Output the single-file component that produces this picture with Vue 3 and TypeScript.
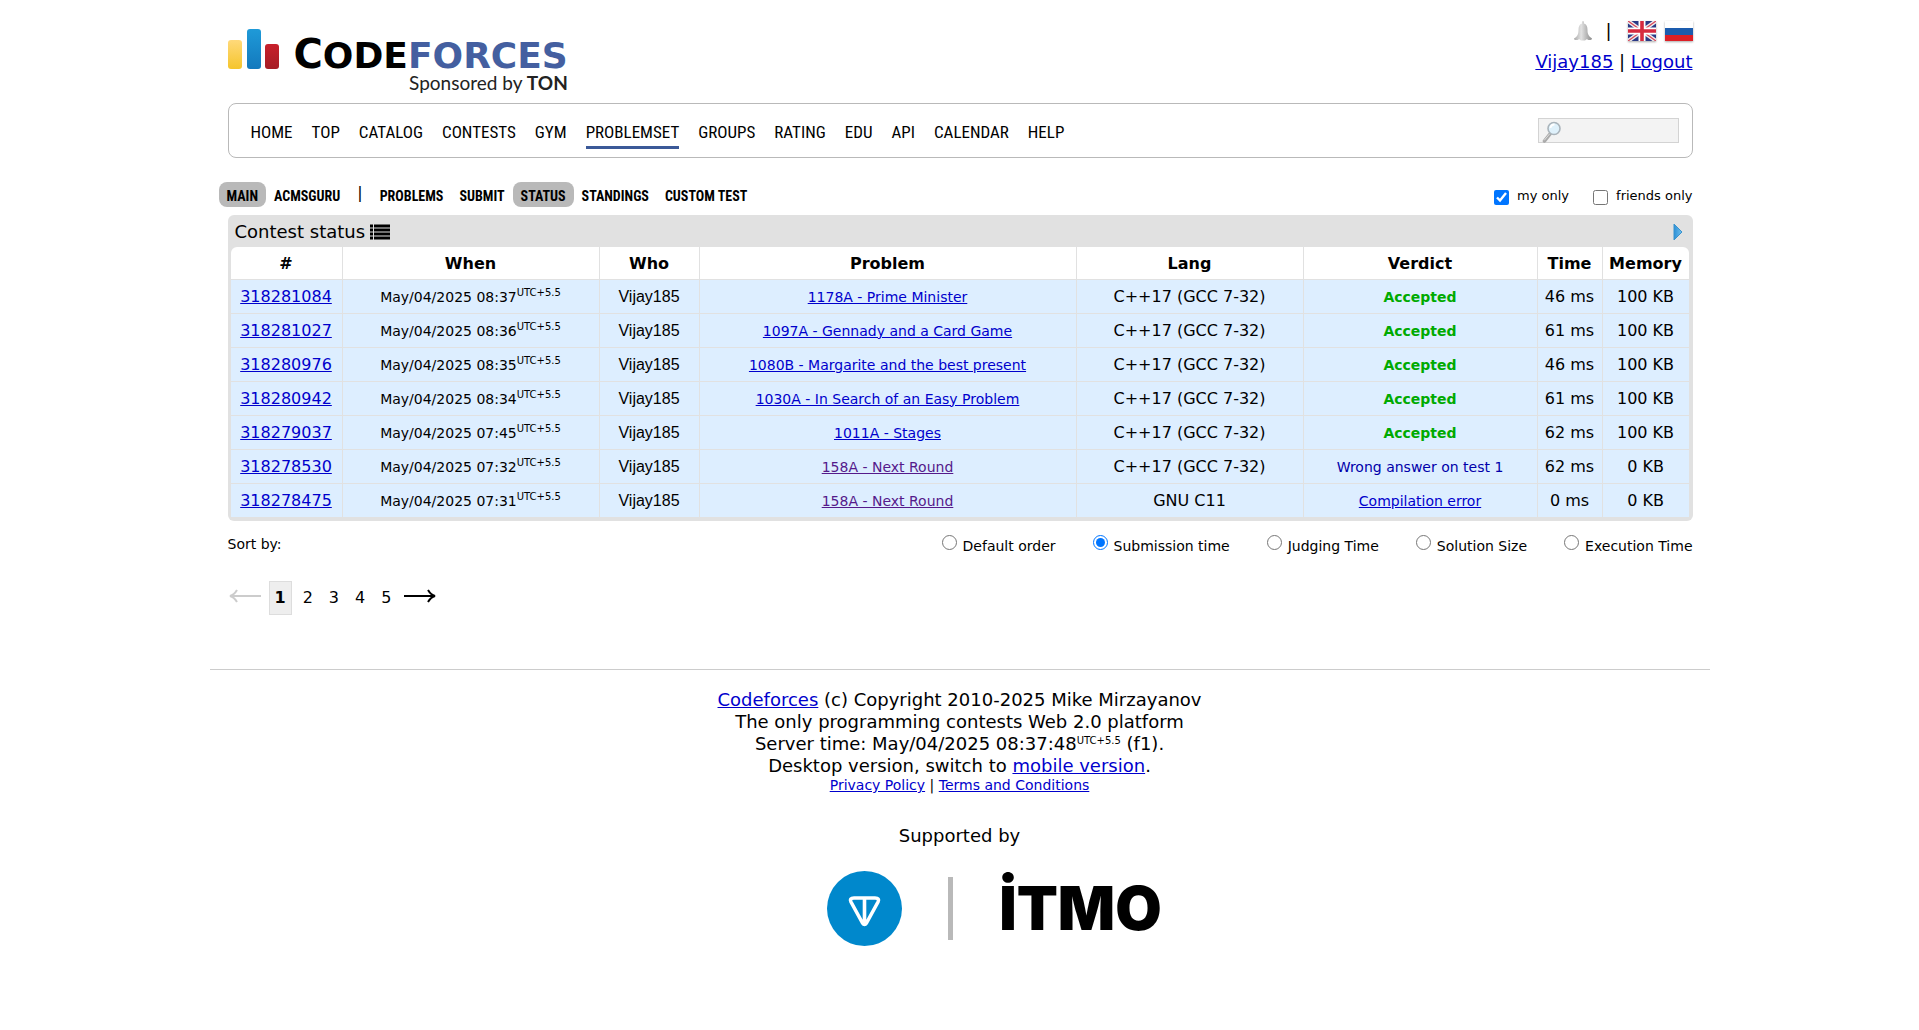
<script setup lang="ts">
import { ref } from 'vue'

interface Submission {
  id: string
  time: string
  problem: string
  visited?: boolean
  lang: string
  verdict: 'Accepted' | 'Wrong answer on test 1' | 'Compilation error'
  duration: string
  memory: string
}

const menu = ['HOME', 'TOP', 'CATALOG', 'CONTESTS', 'GYM', 'PROBLEMSET', 'GROUPS', 'RATING', 'EDU', 'API', 'CALENDAR', 'HELP']
const sectionMenu = ['MAIN', 'ACMSGURU']
const pageMenu = ['PROBLEMS', 'SUBMIT', 'STATUS', 'STANDINGS', 'CUSTOM TEST']
const columns = ['#', 'When', 'Who', 'Problem', 'Lang', 'Verdict', 'Time', 'Memory']
const gcc = 'C++17 (GCC 7-32)'

const submissions: Submission[] = [
  { id: '318281084', time: '08:37', problem: '1178A - Prime Minister', lang: gcc, verdict: 'Accepted', duration: '46 ms', memory: '100 KB' },
  { id: '318281027', time: '08:36', problem: '1097A - Gennady and a Card Game', lang: gcc, verdict: 'Accepted', duration: '61 ms', memory: '100 KB' },
  { id: '318280976', time: '08:35', problem: '1080B - Margarite and the best present', lang: gcc, verdict: 'Accepted', duration: '46 ms', memory: '100 KB' },
  { id: '318280942', time: '08:34', problem: '1030A - In Search of an Easy Problem', lang: gcc, verdict: 'Accepted', duration: '61 ms', memory: '100 KB' },
  { id: '318279037', time: '07:45', problem: '1011A - Stages', lang: gcc, verdict: 'Accepted', duration: '62 ms', memory: '100 KB' },
  { id: '318278530', time: '07:32', problem: '158A - Next Round', visited: true, lang: gcc, verdict: 'Wrong answer on test 1', duration: '62 ms', memory: '0 KB' },
  { id: '318278475', time: '07:31', problem: '158A - Next Round', visited: true, lang: 'GNU C11', verdict: 'Compilation error', duration: '0 ms', memory: '0 KB' },
]

const orders = ['Default order', 'Submission time', 'Judging Time', 'Solution Size', 'Execution Time']
const order = ref('Submission time')
const myOnly = ref(true)
const friendsOnly = ref(false)
const query = ref('')
</script>

<template>
  <div class="page">
    <header class="header">
      <a class="logo" href="#" aria-label="Codeforces">
        <svg class="bars" width="52" height="42" viewBox="0 0 52 42">
          <defs>
            <linearGradient id="barYellow" x2="0" y2="1"><stop offset="0" stop-color="#ffd97a" /><stop offset="1" stop-color="#f5c52c" /></linearGradient>
            <linearGradient id="barBlue" x2="0" y2="1"><stop offset="0" stop-color="#1f9ad8" /><stop offset="1" stop-color="#1379bd" /></linearGradient>
            <linearGradient id="barRed" x2="0" y2="1"><stop offset="0" stop-color="#c8202b" /><stop offset="1" stop-color="#a51d24" /></linearGradient>
          </defs>
          <rect x="0" y="12" width="14" height="29" rx="3" fill="url(#barYellow)" />
          <rect x="19" y="1" width="14" height="40" rx="3" fill="url(#barBlue)" />
          <rect x="37" y="16" width="14" height="25" rx="3" fill="url(#barRed)" />
        </svg>
        <span class="wordmark">
          <span class="name"><span class="initial">C</span>ODE<span class="forces">FORCES</span></span>
          <span class="sponsor">Sponsored by <b>TON</b></span>
        </span>
      </a>
      <div class="account">
        <div class="locale">
          <svg width="20" height="20" viewBox="0 0 20 20">
            <defs><linearGradient id="bell"><stop offset="0" stop-color="#aaa" /><stop offset=".4" stop-color="#e2e2e2" /><stop offset="1" stop-color="#8c8c8c" /></linearGradient></defs>
            <path d="M10 0c1 0 1.200 1 1 2.500 2.500 .5 3.500 3 3.500 6.500 0 4 1 6 4.500 8.500 0 2-3 1.500-4 1.500l-1-1-2 1.500H8L6 18l-1 1C3 19 1 19.500 1 17.500 4.500 15.500 5.500 13 5.500 9 5.500 5.500 6.500 3 9 2.500c-.3-1.500 0-2.500 1-2.500z" fill="url(#bell)" />
          </svg>
          <span class="bar">|</span>
          <a href="#" aria-label="In English">
            <svg class="flag" width="28" height="20" viewBox="0 0 28 20">
              <rect width="28" height="20" fill="#2b3a86" />
              <path d="M0 0L28 20M28 0L0 20" stroke="#eee" stroke-width="4" />
              <path d="M0 0L28 20M28 0L0 20" stroke="#d8475a" stroke-width="1.300" />
              <path d="M14 0V20M0 10H28" stroke="#fff" stroke-width="7" />
              <path d="M14 0V20M0 10H28" stroke="#d62a3f" stroke-width="3.600" />
            </svg>
          </a>
          <a href="#" aria-label="In Russian">
            <svg class="flag" width="28" height="20" viewBox="0 0 28 20">
              <rect width="28" height="7" fill="#fff" />
              <rect y="7" width="28" height="7" fill="#1c5cae" />
              <rect y="14" width="28" height="6" fill="#dd1f26" />
            </svg>
          </a>
        </div>
        <div><a href="#">Vijay185</a> | <a href="#">Logout</a></div>
      </div>
    </header>

    <nav class="menu">
      <a v-for="item in menu" :key="item" href="#" :class="{ current: item === 'PROBLEMSET' }">{{ item }}</a>
      <label class="search">
        <svg width="20" height="22" viewBox="0 0 20 22">
          <path d="M8 13L2.500 20" stroke="#aaa" stroke-width="3.600" stroke-linecap="round" />
          <path d="M7.500 13L2.500 19" stroke="#ddd" stroke-width="1" stroke-linecap="round" />
          <circle cx="12" cy="7.500" r="6" fill="#dff1fb" stroke="#aab4bb" stroke-width="1.600" />
          <path d="M8.500 7a4 4 0 0 1 4-3.500" fill="none" stroke="#fff" stroke-width="1.800" />
        </svg>
        <input v-model="query" type="text" aria-label="Search" />
      </label>
    </nav>

    <div class="subbar">
      <nav class="submenu">
        <a v-for="item in sectionMenu" :key="item" href="#" :class="{ current: item === 'MAIN' }">{{ item }}</a>
        <span class="divider">|</span>
        <a v-for="item in pageMenu" :key="item" href="#" :class="{ current: item === 'STATUS' }">{{ item }}</a>
      </nav>
      <div class="filters">
        <label><input v-model="myOnly" type="checkbox" />my only</label>
        <label><input v-model="friendsOnly" type="checkbox" />friends only</label>
      </div>
    </div>

    <section class="datatable">
      <div class="caption">
        <span>Contest status</span>
        <svg width="20" height="16" viewBox="0 0 20 16">
          <path d="M0 2h3M0 6h3M0 10h3M0 14h3M4 2h16M4 6h16M4 10h16M4 14h16" stroke="#000" stroke-width="3" />
        </svg>
        <svg class="next" width="10" height="18" viewBox="0 0 10 18">
          <defs><linearGradient id="tri"><stop offset="0" stop-color="#2b8fd6" /><stop offset="1" stop-color="#6fc0ee" /></linearGradient></defs>
          <path d="M1 1L9 9L1 17z" fill="url(#tri)" stroke="#3a92cc" />
        </svg>
      </div>
      <div class="frame">
        <table>
          <colgroup>
            <col v-for="(name, i) in columns" :key="name" :class="'col' + i" />
          </colgroup>
          <thead>
            <tr><th v-for="name in columns" :key="name">{{ name }}</th></tr>
          </thead>
          <tbody>
            <tr v-for="s in submissions" :key="s.id">
              <td><a href="#">{{ s.id }}</a></td>
              <td class="small">May/04/2025 {{ s.time }}<sup>UTC+5.5</sup></td>
              <td class="who">Vijay185</td>
              <td class="small"><a href="#" :class="{ visited: s.visited }">{{ s.problem }}</a></td>
              <td>{{ s.lang }}</td>
              <td class="small">
                <b v-if="s.verdict === 'Accepted'" class="accepted">{{ s.verdict }}</b>
                <a v-else-if="s.verdict === 'Compilation error'" href="#">{{ s.verdict }}</a>
                <span v-else class="rejected">{{ s.verdict }}</span>
              </td>
              <td>{{ s.duration }}</td>
              <td>{{ s.memory }}</td>
            </tr>
          </tbody>
        </table>
      </div>
    </section>

    <div class="sorting">
      <span>Sort by:</span>
      <div class="orders">
        <label v-for="name in orders" :key="name"><input v-model="order" type="radio" name="order" :value="name" /><span>{{ name }}</span></label>
      </div>
    </div>

    <nav class="pagination">
      <svg width="34" height="20" viewBox="0 0 34 20"><path d="M33 8H2M9 2Q6 7 2 8Q6 9 9 14" fill="none" stroke="#ccc" stroke-width="2" /></svg>
      <b class="active">1</b>
      <a v-for="n in [2, 3, 4, 5]" :key="n" href="#">{{ n }}</a>
      <svg class="forward" width="34" height="20" viewBox="0 0 34 20"><path d="M1 8H32M25 2Q28 7 32 8Q28 9 25 14" fill="none" stroke="#000" stroke-width="2" /></svg>
    </nav>

    <footer class="footer">
      <div><a href="#">Codeforces</a> (c) Copyright 2010-2025 Mike Mirzayanov</div>
      <div>The only programming contests Web 2.0 platform</div>
      <div>Server time: May/04/2025 08:37:48<sup>UTC+5.5</sup> (f1).</div>
      <div>Desktop version, switch to <a href="#">mobile version</a>.</div>
      <div class="legal"><a href="#">Privacy Policy</a> | <a href="#">Terms and Conditions</a></div>
      <div class="supported">Supported by</div>
      <div class="sponsors">
        <svg width="75" height="75" viewBox="0 0 75 75">
          <circle cx="37.500" cy="37.500" r="37.500" fill="#0088cc" />
          <path d="M27 27H48Q53 27 51 31L39.500 52Q37.500 55 35.500 52L24 31Q22 27 27 27zM37.500 27V53" fill="none" stroke="#fff" stroke-width="3.600" stroke-linejoin="round" />
        </svg>
        <span class="rule"></span>
        <span class="itmo">İTMO</span>
      </div>
    </footer>
  </div>
</template>

<style>
body {
  margin: 0;
  background: #fff;
}
</style>

<style scoped>
.page {
  box-sizing: border-box;
  max-width: 1500px;
  margin: 0 auto;
  padding: 0 17px 0 18px;
  color: #000;
  font: 16px/22px Verdana, "DejaVu Sans", sans-serif;
}
a {
  color: #0000cc;
}
svg {
  display: block;
  flex: none;
}
sup {
  font-size: 10px;
  line-height: 0;
  vertical-align: 6px;
}
.header {
  display: flex;
  justify-content: space-between;
  align-items: flex-start;
  height: 103px;
}
.logo {
  display: flex;
  gap: 14px;
  padding-top: 28px;
  color: #000;
  text-decoration: none;
}
.wordmark {
  display: flex;
  flex-direction: column;
  align-items: flex-end;
  padding-top: 8px;
}
.name {
  font: bold 36px/36px "DejaVu Sans", sans-serif;
}
.initial {
  font-size: 40px;
}
.forces {
  color: #445fa0;
}
.sponsor {
  font: 19px/18px Lato, sans-serif;
  color: #222;
}
.account {
  padding-top: 20px;
  font-size: 18px;
  text-align: right;
}
.locale {
  display: flex;
  justify-content: flex-end;
  align-items: center;
  gap: 9px;
  height: 22px;
  margin-bottom: 9px;
}
.bar {
  margin: 0 7px 0 3px;
}
.flag {
  box-shadow: 0 1px 2px #aaa;
}
.menu {
  display: flex;
  align-items: center;
  gap: 19px;
  box-sizing: border-box;
  height: 55px;
  padding: 0 13px 0 22px;
  border: 1px solid #b9b9b9;
  border-radius: 8px;
}
.menu a {
  padding-top: 5px;
  border-bottom: 3px solid transparent;
  color: #000;
  font: 17px/28px "Roboto Condensed", sans-serif;
  text-decoration: none;
}
.menu a.current {
  border-color: #3b5998;
}
.search {
  display: flex;
  box-sizing: border-box;
  width: 141px;
  height: 25px;
  margin: 0 0 0 auto;
  padding: 2px 0 0 3px;
  border: 1px solid #d3d3d3;
  background: #f3f3f3;
}
.search input {
  min-width: 0;
  flex: 1;
  border: 0;
  padding: 0;
  background: none;
  outline: 0;
}
.subbar {
  display: flex;
  justify-content: space-between;
  align-items: center;
  height: 25px;
  margin: 24px 0 8px -9px;
}
.submenu {
  display: flex;
}
.submenu a {
  padding: 3px 8px 0;
  border-radius: 8px;
  color: #000;
  font: bold 14px/22px "Roboto Condensed", sans-serif;
  text-decoration: none;
}
.submenu a.current {
  background: #b9b9b9;
}
.divider {
  padding: 0 9px;
}
.filters {
  display: flex;
  gap: 24px;
  padding-top: 2px;
  font-size: 13px;
}
.filters label {
  display: flex;
  align-items: center;
  gap: 8px;
}
.filters input {
  width: 15px;
  height: 15px;
  margin: 3px 0 0;
}
.datatable {
  padding: 0 4px 4px 3px;
  border-radius: 6px;
  background: #e1e1e1;
}
.caption {
  display: flex;
  align-items: center;
  gap: 5px;
  box-sizing: border-box;
  height: 32px;
  padding: 1px 6px 0 4px;
  font-size: 18px;
}
.next {
  margin-left: auto;
}
.frame {
  overflow: hidden;
  border-radius: 6px 6px 0 0;
  background: #fff;
}
table {
  width: 100%;
  border-spacing: 0;
  table-layout: fixed;
  text-align: center;
}
.col0 { width: 112px; }
.col1 { width: 257px; }
.col2 { width: 100px; }
.col3 { width: 377px; }
.col4 { width: 227px; }
.col5 { width: 234px; }
.col6 { width: 65px; }
.col7 { width: 86px; }
th,
td {
  height: 33px;
  padding: 0;
  border-right: 1px solid #e1e1e1;
  border-bottom: 1px solid #e1e1e1;
  white-space: nowrap;
}
th {
  height: 30px;
  padding-top: 2px;
}
th:last-child,
td:last-child {
  border-right: 0;
}
tr:last-child td {
  border-bottom: 0;
}
td {
  background: #ddeeff;
}
.who {
  font-family: Arial, "Liberation Sans", sans-serif;
}
.small {
  font-size: 14px;
}
.visited {
  color: #551a8b;
}
.accepted {
  color: #00aa00;
}
.rejected {
  color: #0000aa;
}
.sorting {
  display: flex;
  justify-content: space-between;
  margin-top: 12px;
  font-size: 14px;
}
.orders {
  display: flex;
  gap: 37px;
}
.orders label {
  display: flex;
  gap: 6px;
}
.orders input {
  width: 15px;
  height: 15px;
  margin: 2px 0 0;
}
.orders span {
  padding-top: 2px;
}
.pagination {
  display: flex;
  align-items: center;
  gap: 16px;
  margin-top: 24px;
}
.pagination a {
  color: #000;
  text-decoration: none;
}
.active {
  margin: 0 -5px 0 -9px;
  padding: 5px 5px;
  border: 1px solid #ddd;
  background: #eee;
}
.forward {
  margin-left: -4px;
}
.footer {
  margin: 54px -17px 0 -18px;
  padding-top: 19px;
  border-top: 1px solid #ccc;
  font-size: 18px;
  text-align: center;
}
.legal {
  font-size: 14px;
  line-height: 16px;
}
.supported {
  margin-top: 32px;
}
.sponsors {
  display: flex;
  justify-content: center;
  align-items: center;
  margin-top: 24px;
  padding-left: 70px;
}
.rule {
  width: 5px;
  height: 63px;
  margin: 0 46px;
  background: #b9b9b9;
}
.itmo {
  font: 900 60px/75px Inter, sans-serif;
}
</style>
